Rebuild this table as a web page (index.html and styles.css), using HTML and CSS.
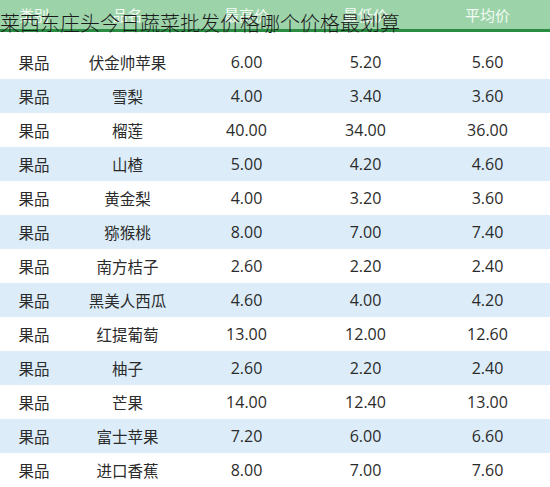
FILE: index.html
```html
<!DOCTYPE html>
<html lang="zh-CN">
<head>
<meta charset="utf-8">
<title>莱西东庄头今日蔬菜批发价格</title>
<link rel="stylesheet" href="styles.css">
</head>
<body>
<div class="page">
  <h1 class="title">莱西东庄头今日蔬菜批发价格哪个价格最划算</h1>
  <table class="prices">
    <thead>
      <tr><th>类别</th><th>品名</th><th>最高价</th><th>最低价</th><th>平均价</th></tr>
    </thead>
    <tbody>
      <tr class="first"><td>果品</td><td>伏金帅苹果</td><td>6.00</td><td>5.20</td><td>5.60</td></tr>
      <tr class="alt"><td>果品</td><td>雪梨</td><td>4.00</td><td>3.40</td><td>3.60</td></tr>
      <tr><td>果品</td><td>榴莲</td><td>40.00</td><td>34.00</td><td>36.00</td></tr>
      <tr class="alt"><td>果品</td><td>山楂</td><td>5.00</td><td>4.20</td><td>4.60</td></tr>
      <tr><td>果品</td><td>黄金梨</td><td>4.00</td><td>3.20</td><td>3.60</td></tr>
      <tr class="alt"><td>果品</td><td>猕猴桃</td><td>8.00</td><td>7.00</td><td>7.40</td></tr>
      <tr><td>果品</td><td>南方桔子</td><td>2.60</td><td>2.20</td><td>2.40</td></tr>
      <tr class="alt"><td>果品</td><td>黑美人西瓜</td><td>4.60</td><td>4.00</td><td>4.20</td></tr>
      <tr><td>果品</td><td>红提葡萄</td><td>13.00</td><td>12.00</td><td>12.60</td></tr>
      <tr class="alt"><td>果品</td><td>柚子</td><td>2.60</td><td>2.20</td><td>2.40</td></tr>
      <tr><td>果品</td><td>芒果</td><td>14.00</td><td>12.40</td><td>13.00</td></tr>
      <tr class="alt"><td>果品</td><td>富士苹果</td><td>7.20</td><td>6.00</td><td>6.60</td></tr>
      <tr><td>果品</td><td>进口香蕉</td><td>8.00</td><td>7.00</td><td>7.60</td></tr>
    </tbody>
  </table>
</div>
</body>
</html>
```
FILE: styles.css
```css
html, body {
  margin: 0;
  padding: 0;
  background: #ffffff;
}
.page {
  position: relative;
  width: 550px;
  height: 487px;
  overflow: hidden;
  font-family: "Noto Sans CJK SC", "Open Sans", sans-serif;
}
.title {
  position: absolute;
  left: 0;
  top: 9px;
  margin: 0;
  font-size: 20px;
  line-height: 28px;
  font-weight: 300;
  color: #1a1a1a;
  white-space: nowrap;
  z-index: 2;
}
.prices {
  width: 550px;
  border-collapse: collapse;
  table-layout: fixed;
}
.prices th:nth-child(1), .prices td:nth-child(1) { width: 68px; }
.prices th:nth-child(2), .prices td:nth-child(2) { width: 119px; }
.prices th:nth-child(3), .prices td:nth-child(3) { width: 119px; }
.prices th:nth-child(4), .prices td:nth-child(4) { width: 119px; }
.prices th:nth-child(5), .prices td:nth-child(5) { width: 125px; }
.prices th {
  height: 29px;
  padding: 0;
  background: #9dd3a9;
  border-bottom: 3px solid #2b8c44;
  color: #f4fbf5;
  font-weight: 400;
  font-size: 15px;
  text-align: center;
  vertical-align: middle;
}
.prices td {
  height: 34px;
  padding: 0;
  text-align: center;
  vertical-align: middle;
  font-size: 16px;
  color: #2b2b2b;
  font-family: "Open Sans", "Noto Sans CJK SC", sans-serif;
}
.prices td:nth-child(-n+2) {
  font-family: "Noto Sans CJK SC", sans-serif;
  font-size: 15.5px;
}
.prices tr.first td {
  height: 34px;
  padding-top: 13px;
}
.prices tr.alt td {
  background: #dcedf9;
}
```
